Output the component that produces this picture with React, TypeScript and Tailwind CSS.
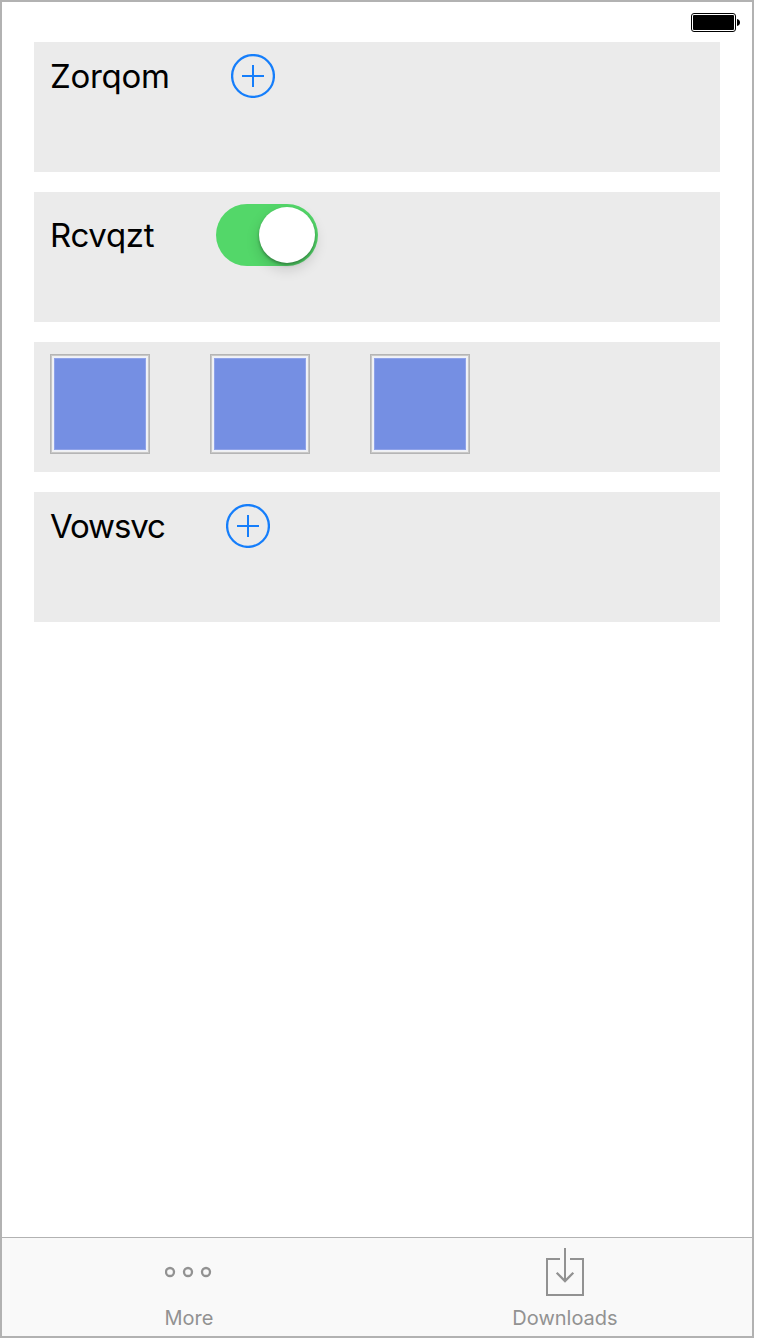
import type { ReactNode } from "react";

function Row({ children }: { children: ReactNode }) {
  return (
    <section className="flex h-[130px] items-start bg-[#ebebeb] pt-3 pl-4">
      {children}
    </section>
  );
}

function AddButton({ label }: { label: string }) {
  return (
    <button type="button" aria-label={label} className="size-11 text-[#157efb]">
      <svg viewBox="0 0 44 44" className="size-11" fill="none" stroke="currentColor" strokeWidth="2.3">
        <circle cx="22" cy="22" r="20.9" />
        <path d="M11 22H33M22 11V33" strokeWidth="2" />
      </svg>
    </button>
  );
}

function StatusBar() {
  return (
    <header className="flex h-10 items-start justify-end pt-[11px] pr-3">
      <svg width="50" height="19" viewBox="0 0 50 19">
        <rect x="1.5" y="0.5" width="44" height="18" rx="2.5" fill="none" stroke="#000" />
        <rect x="3" y="2" width="41" height="15" rx="1" fill="#000" />
        <path d="M47 6C49 6.3 50 7.6 50 9.5S49 12.7 47 13Z" fill="#000" />
      </svg>
    </header>
  );
}

function Swatch() {
  return (
    <div className="size-[100px] border border-[#b5b5b5] bg-[#c7c7c7] p-px">
      <div className="size-full border border-[#f0f0f0] bg-[#eef1fb] p-px">
        <div className="size-full border border-[#8fa2e8] bg-[#758fe3]" />
      </div>
    </div>
  );
}

export default function App() {
  return (
    <div className="h-[1340px] w-[760px] overflow-hidden bg-white font-['Inter',sans-serif]">
      <div className="flex h-[1338px] w-[754px] flex-col border-2 border-[#b2b2b2] bg-white">
        <StatusBar />
        <main className="flex flex-1 flex-col gap-5 px-8">
          <Row>
            <span className="w-[181px] text-[33px] leading-[44px] tracking-[-0.3px] text-black">Zorqom</span>
            <AddButton label="Add Zorqom" />
          </Row>
          <Row>
            <span className="w-[166px] text-[33px] leading-[62px] tracking-[-0.3px] text-black">Rcvqzt</span>
            <button type="button" role="switch" aria-checked="true" aria-label="Rcvqzt" className="flex h-[62px] w-[102px] items-center justify-end rounded-full bg-[#53d769] pr-[3px]">
              <span className="size-14 rounded-full bg-white shadow-[0_6px_14px_rgba(0,0,0,0.16),0_2px_3px_rgba(0,0,0,0.3)]" />
            </button>
          </Row>
          <Row>
            <div className="flex gap-[60px]">
              <Swatch />
              <Swatch />
              <Swatch />
            </div>
          </Row>
          <Row>
            <span className="w-[176px] text-[33px] leading-[44px] tracking-[-1.1px] text-black">Vowsvc</span>
            <AddButton label="Add Vowsvc" />
          </Row>
        </main>
        <nav className="flex h-[99px] border-t border-[#b2b2b2] bg-[#f9f9f9] text-[#929292]">
          <button type="button" className="flex flex-1 flex-col items-center pt-[9px] pr-0.5">
            <svg width="48" height="50" viewBox="0 0 48 50" fill="none" stroke="currentColor" strokeWidth="2.3">
              <circle cx="5" cy="25" r="4" />
              <circle cx="23" cy="25" r="4" />
              <circle cx="41" cy="25" r="4" />
            </svg>
            <span className="mt-[9px] text-[20px] leading-6">More</span>
          </button>
          <button type="button" className="flex flex-1 flex-col items-center pt-[9px]">
            <svg width="38" height="50" viewBox="0 0 38 50" fill="none" stroke="currentColor" strokeWidth="2">
              <path d="M14 12H1V48H37V12H24" />
              <path d="M19 1V34" />
              <path d="M10.7 25.7L19 34L27.3 25.7" strokeWidth="2.3" />
            </svg>
            <span className="mt-[9px] text-[20px] leading-6">Downloads</span>
          </button>
        </nav>
      </div>
    </div>
  );
}
